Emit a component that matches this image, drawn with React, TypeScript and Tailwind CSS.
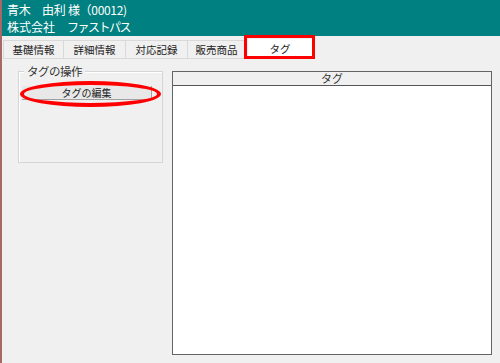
import React from "react";

const font = { fontFamily: '"Noto Sans CJK JP", "Noto Sans", sans-serif' };

const tabs = [
  { label: "基礎情報", w: "w-[61px]" },
  { label: "詳細情報", w: "w-[62px]" },
  { label: "対応記録", w: "w-[62px]" },
  { label: "販売商品", w: "w-[58px]" },
];

export default function App() {
  return (
    <div
      className="relative w-[500px] h-[363px] bg-[#f0f0f0] border-l-2 border-[#a86868] flex flex-col overflow-hidden"
      style={font}
    >
      <div className="h-[36px] bg-[#008080] text-white text-[12px] leading-[16px] px-[5px] pt-[2px] flex flex-col gap-[1px]">
        <div className="tracking-[-0.3px]">青木　由利 様（00012)</div>
        <div>
          株式会社　<span className="tracking-[-1.5px]">ファストパス</span>
        </div>
      </div>
      <div className="flex items-end h-[21px] mt-[2px] pl-[1px] text-[10.5px] text-[#222]">
        {tabs.map((t) => (
          <div
            key={t.label}
            className={`${t.w} h-[19px] border border-[#d9d9d9] border-l-0 first:border-l bg-[#f0f0f0] flex items-center justify-center`}
          >
            {t.label}
          </div>
        ))}
        <div className="ml-[2px] w-[64px] h-[20px] bg-white flex items-center justify-center self-start mt-[1px]">
          タグ
        </div>
      </div>
      <div className="flex flex-1 pt-[12px] pl-[16px] pb-[8px]">
        <div className="relative w-[145px] h-[92px] border border-[#d5d5d5] shadow-[inset_1px_1px_0_#ffffff]">
          <div className="absolute -top-[9px] left-[5px] px-[3px] bg-[#f0f0f0] text-[11.5px] leading-[16px] text-[#333] tracking-[-0.5px]">
            タグの操作
          </div>
          <div className="mt-[14px] ml-[3px] w-[130px] h-[14px] bg-[#e8e8e8] border-b border-r border-[#a0a0a0] flex items-center justify-center text-[10px] text-[#222]">
            タグの編集
          </div>
        </div>
        <div className="ml-[9px] w-[320px] h-[284px] border border-[#646464] bg-white flex flex-col">
          <div className="h-[14px] bg-[#f0f0f0] border-b border-[#555] flex items-center justify-center text-[11px] text-[#333]">
            タグ
          </div>
        </div>
      </div>
      {/* annotations */}
      <div className="absolute left-[242px] top-[35px] w-[71px] h-[24px] border-[3px] border-[#ff0000]" />
      <div className="absolute left-[18px] top-[81px] w-[141px] h-[26px] rounded-[50%] border-[4px] border-[#ff0000]" />
    </div>
  );
}
